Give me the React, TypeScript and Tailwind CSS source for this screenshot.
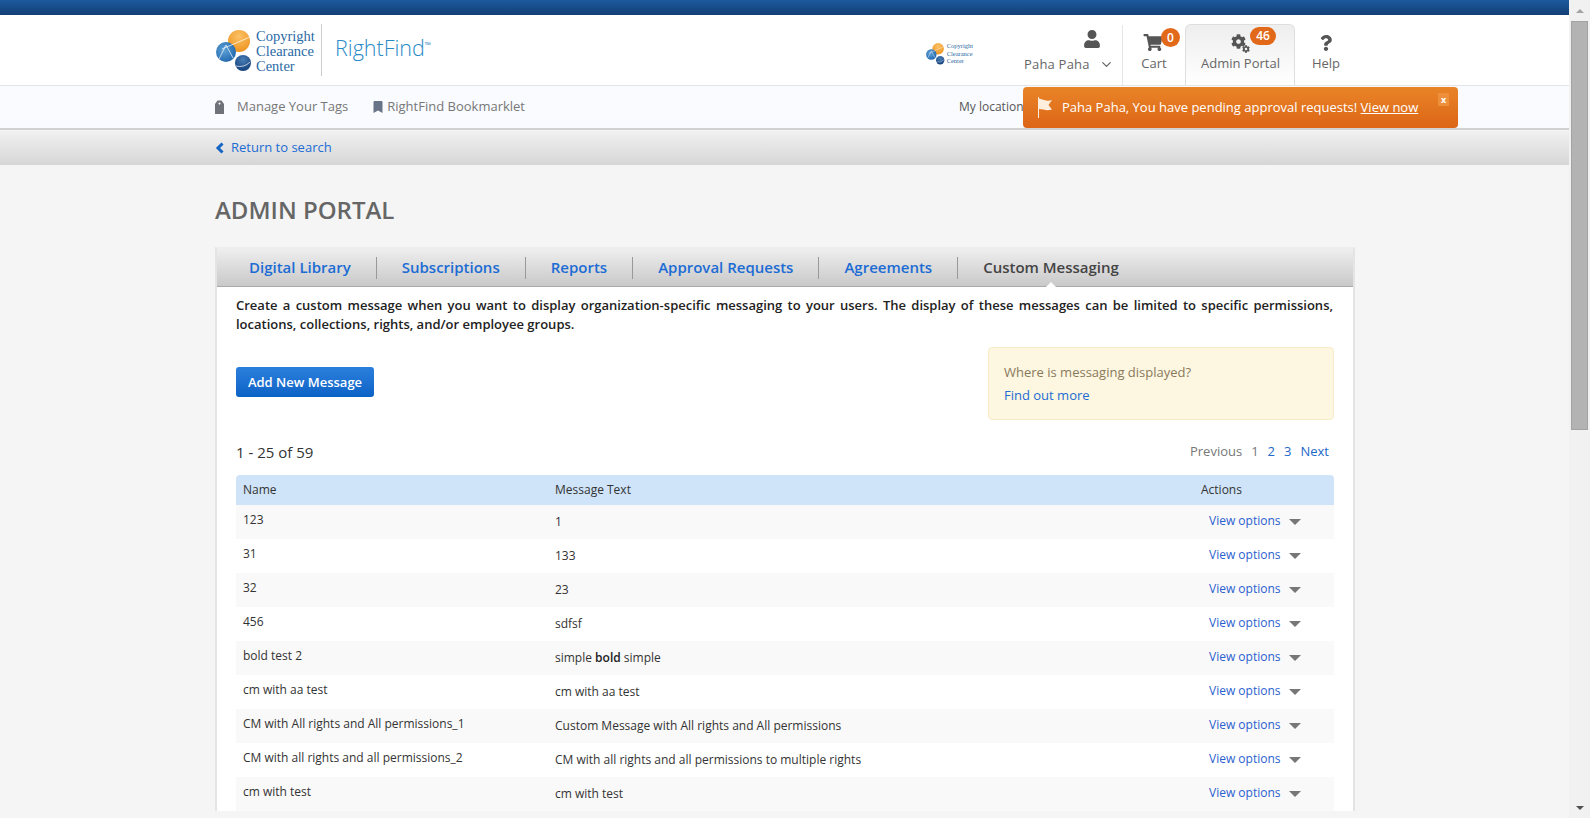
import React from "react";
import { FaUser, FaShoppingCart, FaQuestion, FaCog, FaBookmark } from "react-icons/fa";
import { FiChevronDown } from "react-icons/fi";

const rows: [string, React.ReactNode][] = [
  ["123", "1"],
  ["31", "133"],
  ["32", "23"],
  ["456", "sdfsf"],
  ["bold test 2", <>simple <b className="font-semibold text-[#222]">bold</b> simple</>],
  ["cm with aa test", "cm with aa test"],
  ["CM with All rights and All permissions_1", "Custom Message with All rights and All permissions"],
  ["CM with all rights and all permissions_2", "CM with all rights and all permissions to multiple rights"],
  ["cm with test", "cm with test"],
];

const tabs = ["Digital Library", "Subscriptions", "Reports", "Approval Requests", "Agreements"];

function Logo({ small }: { small?: boolean }) {
  const s = small ? "2" : "1";
  return (
    <svg viewBox="0 0 36 44" className={small ? "w-[19px] h-[23px]" : "w-[36px] h-[44px]"}>
      <defs>
        <radialGradient id={`o${s}`} cx="50%" cy="30%" r="70%"><stop offset="0%" stopColor="#fbc267" /><stop offset="100%" stopColor="#ee9420" /></radialGradient>
        <radialGradient id={`b${s}`} cx="40%" cy="40%" r="70%"><stop offset="0%" stopColor="#5ea2d8" /><stop offset="100%" stopColor="#1c62a8" /></radialGradient>
        <radialGradient id={`d${s}`} cx="50%" cy="30%" r="70%"><stop offset="0%" stopColor="#4a7fb5" /><stop offset="100%" stopColor="#123f7c" /></radialGradient>
      </defs>
      <circle cx="23" cy="13" r="11" fill={`url(#o${s})`} />
      <circle cx="10" cy="24" r="10" fill={`url(#b${s})`} />
      <circle cx="27" cy="35" r="8" fill={`url(#d${s})`} />
      <path d="M3 31 L10 17 L17 30 M6 21 Q 18 16 34 9 M20 38 Q 28 40 34 34" stroke="#fff" strokeWidth="0.7" fill="none" />
    </svg>
  );
}

function Badge({ children, wide }: { children: React.ReactNode; wide?: boolean }) {
  return (
    <span className={`absolute flex items-center justify-center rounded-full bg-[#e2691a] text-white text-[12px] font-semibold leading-none ${wide ? "w-[26px] h-[18px]" : "w-[19px] h-[19px]"}`}
      style={wide ? { top: 2, left: 64 } : { top: 3, left: 38 }}>
      {children}
    </span>
  );
}

export default function App() {
  return (
    <div className="flex h-[818px] w-[1590px] overflow-hidden font-['Open_Sans',sans-serif] text-[#666]">
      <div className="relative flex-1 min-w-0 flex flex-col bg-[#f5f5f5]">
        <div className="h-[15px] bg-gradient-to-b from-[#1c5a9e] to-[#133f75]" />

        <header className="h-[71px] bg-white border-b border-[#e2e4e8]">
          <div className="ml-[215px] w-[1144px] flex items-start h-full">
            <div className="flex items-center h-full pl-[1px]">
              <Logo />
              <div className="ml-[4px] pt-[2px] font-['Liberation_Serif',serif] text-[#2a6aa5] text-[14.5px] leading-[15px] w-[65px]">
                <div>Copyright</div><div>Clearance</div><div>Center</div>
              </div>
              <div className="w-px h-[52px] bg-[#ccc]" />
              <div className="ml-[13px] text-[#2a8ac6] text-[21.5px] font-light leading-none relative -top-[2px]">RightFind<sup className="text-[8px] font-normal -top-[8px]">™</sup></div>
            </div>
            <div className="ml-auto flex items-start h-full">
              <div className="flex items-center mr-[50px] mt-[27px]">
                <Logo small />
                <div className="ml-[2px] font-['Liberation_Serif',serif] text-[#2a6aa5] text-[6.5px] leading-[7.5px]">
                  <div>Copyright</div><div>Clearance</div><div>Center</div>
                </div>
              </div>
              <div className="h-[60px] mt-[10px] w-[100px] flex flex-col border-r border-[#e5e5e5]">
                <FaUser className="self-end w-[20px] h-[18px] shrink-0 text-[#555] mt-[5px] mr-[20px]" />
                <div className="text-[13px] mt-[7px] pl-[1px] flex items-center tracking-[0.2px] whitespace-nowrap">Paha Paha<FiChevronDown className="ml-[9px] w-[15px] h-[15px] shrink-0" /></div>
              </div>
              <div className="relative h-[60px] mt-[10px] w-[62px] flex flex-col items-center">
                <FaShoppingCart className="w-[22px] h-[17px] text-[#555] mt-[9px] mr-[2px]" />
                <Badge>0</Badge>
                <div className="text-[13px] mt-[3px]">Cart</div>
              </div>
              <div className="relative h-[61px] mt-[9px] w-[110px] flex flex-col items-center border border-b-0 border-[#dedede] rounded-t-[6px] bg-gradient-to-b from-[#eeeeee] to-[#ffffff]">
                <span className="relative w-[24px] h-[24px] mt-[9px] ml-[1px]">
                  <FaCog className="absolute left-[2px] top-0 w-[15px] h-[15px] text-[#555]" />
                  <FaCog className="absolute left-[13px] top-[11px] w-[8px] h-[8px] text-[#555]" />
                </span>
                <Badge wide>46</Badge>
                <div className="text-[13px] -mt-[4px] whitespace-nowrap ml-[1px]">Admin Portal</div>
              </div>
              <div className="h-[60px] mt-[10px] w-[62px] flex flex-col items-center">
                <FaQuestion className="w-[12px] h-[16px] text-[#555] mt-[10px]" />
                <div className="text-[13px] mt-[3px]">Help</div>
              </div>
              <div className="w-[2px]" />
            </div>
          </div>
        </header>

        <div className="h-[44px] bg-[#f9fbff] border-b-[2px] border-[#d2d2d2]">
          <div className="ml-[215px] w-[1144px] h-full flex items-center text-[13px] text-[#777]">
            <svg viewBox="0 0 9 14" className="w-[9px] h-[14px] text-[#6f7278]">
              <path fillRule="evenodd" fill="currentColor" d="M2.5 0.5h4L9 4v10H0V4zM4.5 2.5a1 1 0 1 0 0.01 0z" />
            </svg>
            <span className="ml-[13px]">Manage Your Tags</span>
            <FaBookmark className="ml-[25px] w-[10px] h-[12px] text-[#6a7488]" />
            <span className="ml-[4px]">RightFind Bookmarklet</span>
            <span className="ml-[434px] text-[12px] text-[#555] whitespace-nowrap">My location &amp; Language</span>
          </div>
        </div>

        <div className="mt-[1px] h-[34px] bg-gradient-to-b from-[#f1f1f1] to-[#d6d6d6]">
          <div className="ml-[215px] w-[1144px] h-full flex items-center text-[13px] text-[#1c6cd4]">
            <svg viewBox="0 0 10 12" className="w-[10px] h-[12px] mr-[6px] text-[#1566c4]">
              <path d="M7.5 1.5 L3 6 L7.5 10.5" fill="none" stroke="currentColor" strokeWidth="3" />
            </svg>
            Return to search
          </div>
        </div>

        <main className="flex-1 overflow-hidden">
          <div className="ml-[215px] w-[1144px]">
            <h1 className="mt-[30px] text-[24px] leading-[30px] font-semibold text-[#666]">ADMIN PORTAL</h1>

            <section className="mt-[22px] w-[1140px] bg-white border-x-2 border-[#e4e4e4] border-t-2 border-t-[#ededed]">
              <nav className="relative h-[38px] bg-gradient-to-b from-[#eeeeee] to-[#c9c9c9] border-b border-[#aaa] flex items-center text-[15px] font-semibold pl-[32px]">
                {tabs.map((t) => (
                  <React.Fragment key={t}>
                    <span className="text-[#1c6cd4] whitespace-nowrap">{t}</span>
                    <span className="w-px h-[22px] bg-[#999] mx-[25px]" />
                  </React.Fragment>
                ))}
                <span className="relative text-[#444] whitespace-nowrap">Custom Messaging
                  <span className="absolute left-1/2 -translate-x-1/2 bottom-[-9px] w-0 h-0 border-x-[6px] border-x-transparent border-b-[6px] border-b-white" />
                </span>
              </nav>

              <div className="px-[19px]">
                <p className="mt-[9px] pr-[1px] text-[13px] font-semibold leading-[18.5px] text-[#222] text-justify">
                  Create a custom message when you want to display organization-specific messaging to your users. The display of these messages can be limited to specific permissions, locations, collections, rights, and/or employee groups.
                </p>

                <div className="mt-[14px] flex items-start justify-between">
                  <button className="mt-[20px] w-[138px] h-[30px] pt-[1px] rounded-[3px] bg-gradient-to-b from-[#2b7fdc] to-[#0a62c6] text-white text-[13px] font-semibold">Add New Message</button>
                  <div className="w-[346px] h-[73px] rounded-[4px] border border-[#f6ecc8] bg-[#fdf6e1] px-[15px] pt-[13px] text-[13px] leading-[23px]">
                    <div className="text-[#8a7a5c]">Where is messaging displayed?</div>
                    <div className="text-[#1c6cd4]">Find out more</div>
                  </div>
                </div>

                <div className="mt-[21px] flex items-center justify-between h-[22px]">
                  <span className="text-[15px] text-[#333]">1 - 25 of 59</span>
                  <div className="text-[13px] flex gap-[9px] pr-[5px] text-[#2168c8]">
                    <span className="text-[#777]">Previous</span>
                    <span className="text-[#777]">1</span>
                    <span>2</span>
                    <span>3</span>
                    <span>Next</span>
                  </div>
                </div>

                <div className="mt-[12px]">
                  <div className="h-[30px] rounded-t-[4px] bg-[#cfe4f9] grid grid-cols-[311px_654px_1fr] items-center text-[12px] font-medium text-[#333]">
                    <span className="pl-[7px]">Name</span>
                    <span className="pl-[8px]">Message Text</span>
                    <span>Actions</span>
                  </div>
                  {rows.map(([name, msg], i) => (
                    <div key={i} className={`h-[34px] grid grid-cols-[311px_654px_1fr] text-[12px] text-[#333] ${i % 2 === 0 ? "bg-[#f9f9f9]" : "bg-white"}`}>
                      <span className="pl-[7px] pt-[6px] leading-[18px]">{name}</span>
                      <span className="pl-[8px] pt-[8px] leading-[18px]">{msg}</span>
                      <span className="pl-[8px] pt-[7px] leading-[18px] flex items-start text-[#2a5fcf]">
                        View options
                        <span className="ml-[8px] mt-[7px] w-0 h-0 border-x-[6px] border-x-transparent border-t-[6px] border-t-[#777]" />
                      </span>
                    </div>
                  ))}
                </div>
              </div>
            </section>
          </div>
        </main>

        <div className="absolute left-[1023px] top-[87px] w-[435px] h-[41px] rounded-[4px] bg-gradient-to-b from-[#e98427] to-[#dc6516] flex items-center text-white text-[13px] font-medium">
          <svg viewBox="0 0 16 21" className="ml-[14px] w-[16px] h-[21px] text-[#fdeede]">
            <path fill="currentColor" d="M1 0h1v21H1zM2 1.5 L7 3 Q11 4.5 15 3 L11.5 8 L15 12.5 Q10 14 6.5 12.5 L2 12z" />
          </svg>
          <span className="ml-[9px] whitespace-nowrap">Paha Paha, You have pending approval requests! <u>View now</u></span>
          <span className="absolute right-[9px] top-[6px] w-[11px] h-[13px] bg-[#ee8f3c] text-[9px] font-bold flex items-center justify-center">x</span>
        </div>
      </div>

      <div className="relative w-[21px] bg-[#f1f1f1] flex flex-col items-center shrink-0">
        <div className="h-[21px] flex items-center justify-center"><span className="w-0 h-0 border-x-[4px] border-x-transparent border-b-[4px] border-b-[#a3a3a3]" /></div>
        <div className="w-[17px] h-[409px] bg-[#b3b3b3] border border-[#a3a3a3]" />
        <div className="mt-auto h-[21px] flex items-center justify-center"><span className="w-0 h-0 border-x-[4px] border-x-transparent border-t-[4px] border-t-[#505050]" /></div>
      </div>
    </div>
  );
}
